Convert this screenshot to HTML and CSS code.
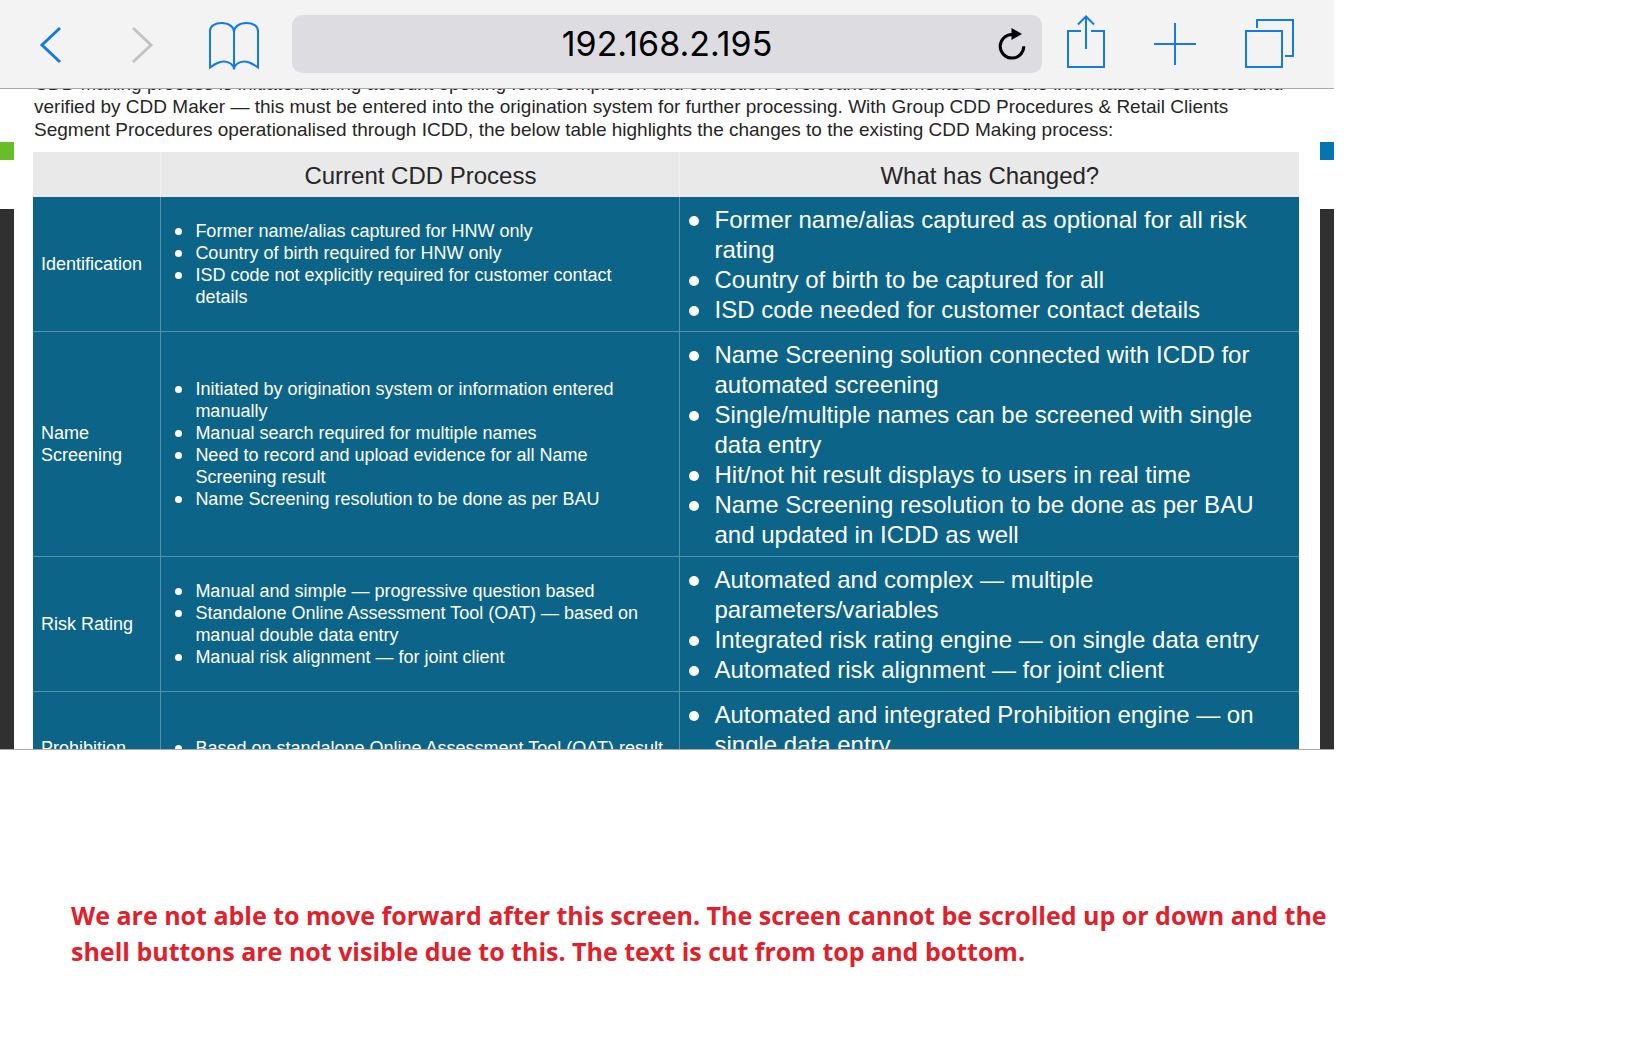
FILE: index.html
```html
<!DOCTYPE html>
<html lang="en">
<head>
<meta charset="utf-8">
<title>CDD Making process</title>
<link rel="stylesheet" href="styles.css">
</head>
<body>
<main class="report">
  <section class="device">
    <header class="toolbar">
      <button class="tool" type="button" aria-label="Back"><svg viewBox="0 0 90 88"><path class="bold" d="M52 28 34 45 52 62"/></svg></button>
      <button class="tool tool-off" type="button" aria-label="Forward" disabled><svg viewBox="0 0 90 88"><path class="bold" d="M35 28 53 45 35 62"/></svg></button>
      <button class="tool" type="button" aria-label="Bookmarks"><svg viewBox="0 0 90 88"><path d="M46 32V69.500C46 65 41 61.500 36 61.500 30.500 61.500 27 64 22 67.500V31C22 26 27 23 33.500 23 41 23 46 27 46 32ZM46 32C46 27 51 23 58.500 23 65 23 70 26 70 31V67.500C65 64 61.500 61.500 56 61.500 51 61.500 46 65 46 69.500"/></svg></button>
      <div class="address">
        <input class="address-field" type="text" aria-label="Address" value="192.168.2.195">
        <button class="reload" type="button" aria-label="Reload"><svg viewBox="0 0 28 32"><path class="ring" d="M14 6.500A11.800 11.800 0 1 0 25.800 18.300"/><path class="tip" d="M13.500 0 24 6 13.500 12Z"/></svg></button>
      </div>
      <button class="tool" type="button" aria-label="Share"><svg viewBox="0 0 90 88"><path d="M39 31H26V67H62V31H49M44 49V17M36 24.500 44 16.500 52 24.500"/></svg></button>
      <button class="tool" type="button" aria-label="New tab"><svg viewBox="0 0 90 88"><path d="M43 23V65M22 44H64"/></svg></button>
      <button class="tool" type="button" aria-label="Tabs"><svg viewBox="0 0 90 88"><path d="M24 31H60V67H24ZM35 28V20H71V56H63"/></svg></button>
    </header>
    <div class="viewport">
      <div class="rail rail-left"></div>
      <article class="content">
        <p class="intro">CDD Making process is initiated during account opening form completion and collection of relevant documents. Once the information is collected and verified by CDD Maker — this must be entered into the origination system for further processing. With Group CDD Procedures &amp; Retail Clients Segment Procedures operationalised through ICDD, the below table highlights the changes to the existing CDD Making process:</p>
        <table class="changes">
          <colgroup><col class="col-topic"><col class="col-current"><col></colgroup>
          <thead>
            <tr><td></td><th scope="col">Current CDD Process</th><th scope="col">What has Changed?</th></tr>
          </thead>
          <tbody>
            <tr>
              <th scope="row">Identification</th>
              <td class="current"><ul><li>Former name/alias captured for HNW only</li><li>Country of birth required for HNW only</li><li>ISD code not explicitly required for customer contact details</li></ul></td>
              <td class="changed"><ul><li>Former name/alias captured as optional for all risk rating</li><li>Country of birth to be captured for all</li><li>ISD code needed for customer contact details</li></ul></td>
            </tr>
            <tr>
              <th scope="row">Name Screening</th>
              <td class="current"><ul><li>Initiated by origination system or information entered manually</li><li>Manual search required for multiple names</li><li>Need to record and upload evidence for all Name Screening result</li><li>Name Screening resolution to be done as per BAU</li></ul></td>
              <td class="changed"><ul><li>Name Screening solution connected with ICDD for automated screening</li><li>Single/multiple names can be screened with single data entry</li><li>Hit/not hit result displays to users in real time</li><li>Name Screening resolution to be done as per BAU and updated in ICDD as well</li></ul></td>
            </tr>
            <tr>
              <th scope="row">Risk Rating</th>
              <td class="current"><ul><li>Manual and simple — progressive question based</li><li>Standalone Online Assessment Tool (OAT) — based on manual double data entry</li><li>Manual risk alignment — for joint client</li></ul></td>
              <td class="changed"><ul><li>Automated and complex — multiple parameters/variables</li><li>Integrated risk rating engine — on single data entry</li><li>Automated risk alignment — for joint client</li></ul></td>
            </tr>
            <tr class="last">
              <th scope="row">Prohibition</th>
              <td class="current"><ul><li>Based on standalone Online Assessment Tool (OAT) result</li></ul></td>
              <td class="changed"><ul><li>Automated and integrated Prohibition engine — on single data entry</li></ul></td>
            </tr>
          </tbody>
        </table>
      </article>
      <div class="rail rail-right"></div>
    </div>
  </section>
  <p class="note">We are not able to move forward after this screen. The screen cannot be scrolled up or down and the shell buttons are not visible due to this. The text is cut from top and bottom.</p>
</main>
</body>
</html>
```

FILE: styles.css
```css
* { box-sizing: border-box; }

body {
  margin: 0;
  background: #fff;
  color: #262626;
  font-family: "Liberation Sans", Arial, sans-serif;
}

.report { width: 81.35%; }

.device {
  display: flex;
  flex-direction: column;
  aspect-ratio: 16 / 9;
  overflow: hidden;
  border-bottom: 1px solid #a9a9a9;
}

/* Browser toolbar */
.toolbar {
  display: flex;
  flex: none;
  align-items: center;
  height: 89px;
  padding: 0 22px 0 8px;
  background: #f3f3f3;
  border-bottom: 1px solid #a9a9a9;
}

.tool {
  flex: none;
  width: 90px;
  height: 88px;
  padding: 0;
  border: 0;
  background: none;
  color: #137ae8;
}

.tool-off { color: #c3c3c3; }

.tool svg, .reload svg { display: block; width: 100%; height: 100%; }

.tool path {
  fill: none;
  stroke: currentColor;
  stroke-width: 2;
}

.tool .bold { stroke-width: 3; }

.address {
  display: flex;
  flex: 1;
  align-items: center;
  height: 58px;
  margin-left: 14px;
  padding: 0 16px 0 44px;
  border-radius: 10px;
  background: #dddce1;
}

.address-field {
  flex: 1;
  min-width: 0;
  padding: 0;
  border: 0;
  background: none;
  color: #000;
  font: 34px/40px Inter, sans-serif;
  text-align: center;
}

.reload {
  width: 28px;
  height: 32px;
  padding: 0;
  border: 0;
  background: none;
}

.reload .ring { fill: none; stroke: #000; stroke-width: 3; }
.reload .tip { fill: #000; }

/* Page shown under the toolbar */
.viewport {
  display: grid;
  grid-template-columns: 14px 1fr 14px;
  flex: 1;
  min-height: 0;
  overflow: hidden;
}

.rail {
  display: flex;
  flex-direction: column;
  gap: 49px;
  padding-top: 53px;
}

.rail::before { content: ""; height: 18px; background: #69be28; }
.rail-right::before { background: #0075b0; }
.rail::after { content: ""; flex: 1; background: #303030; }

.content {
  margin-top: -17px;
  padding: 0 21px 0 19px;
}

.intro {
  margin: 0 0 11px;
  padding-left: 1px;
  font-size: 19px;
  line-height: 23px;
}

.changes {
  width: 100%;
  table-layout: fixed;
  border-collapse: collapse;
}

.col-topic { width: 10.1%; }
.col-current { width: 41%; }

.changes th, .changes td { font-weight: 400; }

.changes thead tr { height: 45px; background: #e9e9e9; }
.changes thead th { padding: 2px 0 0; font-size: 24px; line-height: 28px; }

.changes tbody { background: #0c6489; color: #fff; }
.changes tbody tr + tr { border-top: 1px solid #5591ac; }
.changes tbody * + td { border-left: 1px solid #5591ac; }
.changes thead * + th { border-left: 1px solid #f3f3f3; }

.changes tbody th {
  padding: 0 8px;
  font-size: 18px;
  line-height: 22px;
  text-align: left;
}

.changes ul { margin: 0; padding: 0; list-style: none; }

.changes li::before {
  content: "";
  float: left;
  width: 7px;
  height: 7px;
  margin: 8px 0 0 -20px;
  border-radius: 50%;
  background: #fff;
}

.changes .changed li::before {
  width: 10px;
  height: 10px;
  margin: 11px 0 0 -25px;
}

.current { padding: 0 15px 0 34px; font-size: 18px; line-height: 22px; }
.changed { padding: 8px 24px 6px 34px; font-size: 24px; line-height: 30px; vertical-align: top; }

.last { height: 112px; }

.note {
  margin: 0;
  padding: 147px 0 0 71px;
  color: #e0202a;
  font: 700 25px/36px "Open Sans", sans-serif;
}
```
